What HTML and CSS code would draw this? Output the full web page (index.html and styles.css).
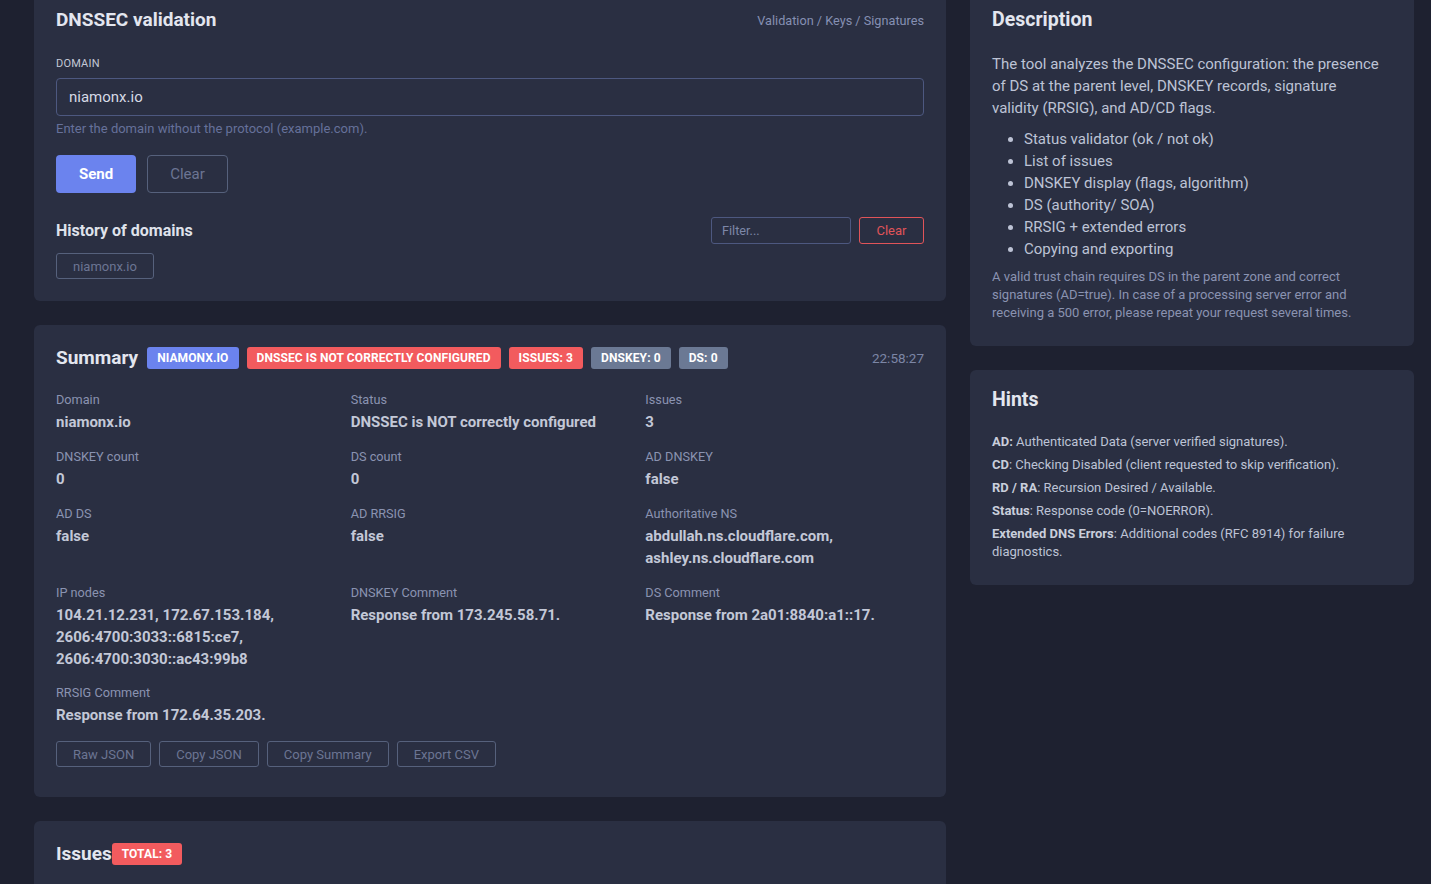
FILE: index.html
```html
<!DOCTYPE html>
<html lang="en">
<head>
<meta charset="utf-8">
<title>DNSSEC validation</title>
<link rel="stylesheet" href="styles.css">
</head>
<body>
<div class="layout">
  <main class="main-col">
    <section class="card card-form">
      <div class="card-head">
        <h2 class="title">DNSSEC validation</h2>
        <span class="crumbs">Validation / Keys / Signatures</span>
      </div>
      <label class="field-label">DOMAIN</label>
      <div class="input">niamonx.io</div>
      <div class="hint">Enter the domain without the protocol (example.com).</div>
      <div class="actions">
        <button class="btn btn-primary">Send</button>
        <button class="btn btn-ghost">Clear</button>
      </div>
      <div class="history-head">
        <h3 class="subtitle">History of domains</h3>
        <div class="history-tools">
          <div class="filter">Filter...</div>
          <button class="btn-danger">Clear</button>
        </div>
      </div>
      <div class="chips">
        <span class="chip">niamonx.io</span>
      </div>
    </section>

    <section class="card card-summary">
      <div class="summary-head">
        <h2 class="title title-lg">Summary</h2>
        <span class="badge badge-blue">NIAMONX.IO</span>
        <span class="badge badge-red">DNSSEC IS NOT CORRECTLY CONFIGURED</span>
        <span class="badge badge-red">ISSUES: 3</span>
        <span class="badge badge-gray">DNSKEY: 0</span>
        <span class="badge badge-gray">DS: 0</span>
        <span class="time">22:58:27</span>
      </div>
      <div class="kv-grid">
        <div class="kv"><div class="k">Domain</div><div class="v">niamonx.io</div></div>
        <div class="kv"><div class="k">Status</div><div class="v">DNSSEC is NOT correctly configured</div></div>
        <div class="kv"><div class="k">Issues</div><div class="v">3</div></div>
        <div class="kv"><div class="k">DNSKEY count</div><div class="v">0</div></div>
        <div class="kv"><div class="k">DS count</div><div class="v">0</div></div>
        <div class="kv"><div class="k">AD DNSKEY</div><div class="v">false</div></div>
        <div class="kv"><div class="k">AD DS</div><div class="v">false</div></div>
        <div class="kv"><div class="k">AD RRSIG</div><div class="v">false</div></div>
        <div class="kv"><div class="k">Authoritative NS</div><div class="v">abdullah.ns.cloudflare.com,<br>ashley.ns.cloudflare.com</div></div>
        <div class="kv"><div class="k">IP nodes</div><div class="v">104.21.12.231, 172.67.153.184,<br>2606:4700:3033::6815:ce7,<br>2606:4700:3030::ac43:99b8</div></div>
        <div class="kv"><div class="k">DNSKEY Comment</div><div class="v">Response from 173.245.58.71.</div></div>
        <div class="kv"><div class="k">DS Comment</div><div class="v">Response from 2a01:8840:a1::17.</div></div>
        <div class="kv"><div class="k">RRSIG Comment</div><div class="v">Response from 172.64.35.203.</div></div>
      </div>
      <div class="tools">
        <button class="btn-sm">Raw JSON</button>
        <button class="btn-sm">Copy JSON</button>
        <button class="btn-sm">Copy Summary</button>
        <button class="btn-sm">Export CSV</button>
      </div>
    </section>

    <section class="card card-issues">
      <div class="issues-head">
        <h2 class="title title-lg">Issues</h2>
        <span class="badge badge-red">TOTAL: 3</span>
      </div>
    </section>
  </main>

  <aside class="side-col">
    <section class="card card-desc">
      <h2 class="title title-side">Description</h2>
      <p class="desc">The tool analyzes the DNSSEC configuration: the presence of DS at the parent level, DNSKEY records, signature validity (RRSIG), and AD/CD flags.</p>
      <ul class="desc-list">
        <li>Status validator (ok / not ok)</li>
        <li>List of issues</li>
        <li>DNSKEY display (flags, algorithm)</li>
        <li>DS (authority/ SOA)</li>
        <li>RRSIG + extended errors</li>
        <li>Copying and exporting</li>
      </ul>
      <p class="note">A valid trust chain requires DS in the parent zone and correct signatures (AD=true). In case of a processing server error and receiving a 500 error, please repeat your request several times.</p>
    </section>

    <section class="card card-hints">
      <h2 class="title title-side">Hints</h2>
      <p class="hint-line"><b>AD:</b> Authenticated Data (server verified signatures).</p>
      <p class="hint-line"><b>CD</b>: Checking Disabled (client requested to skip verification).</p>
      <p class="hint-line"><b>RD / RA</b>: Recursion Desired / Available.</p>
      <p class="hint-line"><b>Status</b>: Response code (0=NOERROR).</p>
      <p class="hint-line"><b>Extended DNS Errors</b>: Additional codes (RFC 8914) for failure diagnostics.</p>
    </section>
  </aside>
</div>
</body>
</html>
```

FILE: styles.css
```css
* { box-sizing: border-box; }
html, body {
  margin: 0;
  background: #1e2130;
  font-family: Roboto, "Liberation Sans", sans-serif;
  color: #c5cad8;
  overflow: hidden;
}
.layout {
  display: grid;
  grid-template-columns: 1fr 444px;
  column-gap: 24px;
  padding: 0 17px 40px 34px;
  margin-top: -10px;
  align-items: start;
}
.main-col, .side-col {
  display: flex;
  flex-direction: column;
  gap: 24px;
}
.card {
  background: #2a2f42;
  border-radius: 6px;
  padding: 19px 22px 22px;
}
.title {
  margin: 0;
  font-size: 19px;
  line-height: 22px;
  font-weight: 700;
  color: #e3e6ef;
}
.title-lg { font-size: 19px; }
.title-side { font-size: 19.5px; }

/* form card */
.card-form { padding-bottom: 22px; }
.card-head {
  display: flex;
  justify-content: space-between;
  align-items: center;
  margin-bottom: 26px;
}
.crumbs {
  font-size: 12.7px;
  color: #8690b3;
}
.field-label {
  display: block;
  font-size: 11px;
  line-height: 14px;
  color: #c3c8d6;
  letter-spacing: 0.2px;
  margin-bottom: 7px;
}
.input {
  height: 38px;
  border: 1px solid #4d5880;
  border-radius: 4px;
  padding: 0 12px;
  display: flex;
  align-items: center;
  font-size: 15px;
  color: #d6dae5;
}
.hint {
  font-size: 13px;
  line-height: 16px;
  color: #66719a;
  margin-top: 5px;
}
.actions {
  display: flex;
  gap: 11px;
  margin-top: 18px;
}
.btn {
  height: 38px;
  border-radius: 4px;
  font-family: inherit;
  font-size: 15px;
  padding: 0;
}
.btn-primary {
  width: 80px;
  background: #6b83ee;
  border: none;
  color: #ffffff;
  font-weight: 700;
}
.btn-ghost {
  width: 81px;
  background: transparent;
  border: 1px solid #56617c;
  color: #6c7593;
}
.history-head {
  display: flex;
  justify-content: space-between;
  align-items: center;
  margin-top: 24px;
}
.subtitle {
  margin: 0;
  font-size: 16px;
  font-weight: 700;
  color: #dfe2eb;
}
.history-tools {
  display: flex;
  gap: 8px;
  align-items: center;
}
.filter {
  width: 140px;
  height: 27px;
  border: 1px solid #4d5880;
  border-radius: 3px;
  padding: 0 10px;
  display: flex;
  align-items: center;
  font-size: 12.7px;
  color: #7d87a8;
}
.btn-danger {
  width: 65px;
  height: 27px;
  background: transparent;
  border: 1px solid #e05459;
  border-radius: 3px;
  color: #e05459;
  font-family: inherit;
  font-size: 13px;
  padding: 0;
}
.chips {
  display: flex;
  margin-top: 9px;
}
.chip {
  height: 26px;
  padding: 0 16px;
  border: 1px solid #56617c;
  border-radius: 3px;
  display: flex;
  align-items: center;
  font-size: 13px;
  color: #6c7593;
}

/* summary */
.card-summary { padding-top: 22px; padding-bottom: 30px; }
.summary-head {
  display: flex;
  align-items: center;
  gap: 8px;
  height: 22px;
}
.summary-head .title { margin-right: 1px; }
.badge {
  height: 22px;
  padding: 0 10px;
  border-radius: 3px;
  display: inline-flex;
  align-items: center;
  font-size: 12px;
  font-weight: 700;
  color: #ffffff;
  letter-spacing: 0.1px;
}
.badge-blue { background: #6b83ee; }
.badge-red { background: #f25b5e; }
.badge-gray { background: #6b7994; }
.time {
  margin-left: auto;
  font-size: 13.5px;
  color: #7c86a6;
}
.kv-grid {
  display: grid;
  grid-template-columns: repeat(3, 1fr);
  column-gap: 16px;
  row-gap: 15px;
  margin-top: 22px;
}
.k {
  font-size: 12.7px;
  line-height: 18px;
  color: #8a93b1;
  margin-bottom: 2px;
}
.v {
  font-size: 15px;
  line-height: 22px;
  font-weight: 700;
  color: #c3c8d7;
}
.kv-grid .kv:nth-child(13) { margin-top: -1px; }
.tools {
  display: flex;
  gap: 8px;
  margin-top: 15px;
}
.btn-sm {
  height: 26px;
  padding: 0 16px;
  background: transparent;
  border: 1px solid #56617c;
  border-radius: 3px;
  font-family: inherit;
  font-size: 13px;
  color: #6c7593;
}

/* issues */
.card-issues { padding-top: 22px; min-height: 90px; }
.issues-head {
  display: flex;
  align-items: center;
  height: 22px;
}

/* side */
.card-desc { padding: 19px 30px 24px 22px; }
.desc {
  margin: 22px 0 0;
  font-size: 15px;
  line-height: 22px;
  color: #bdc3d5;
}
.desc-list {
  margin: 9px 0 0;
  padding-left: 32px;
  font-size: 15px;
  line-height: 22px;
  color: #bdc3d5;
}
.note {
  margin: 8px 0 0;
  font-size: 13px;
  line-height: 18px;
  color: #8a93b1;
}
.card-hints { padding-bottom: 24px; }
.card-hints .title { margin-bottom: 22px; }
.hint-line {
  margin: 0 0 5px;
  font-size: 13px;
  line-height: 18px;
  color: #bdc3d5;
}
.hint-line:last-child { margin-bottom: 0; }
.hint-line b { color: #c9cedb; }
```
